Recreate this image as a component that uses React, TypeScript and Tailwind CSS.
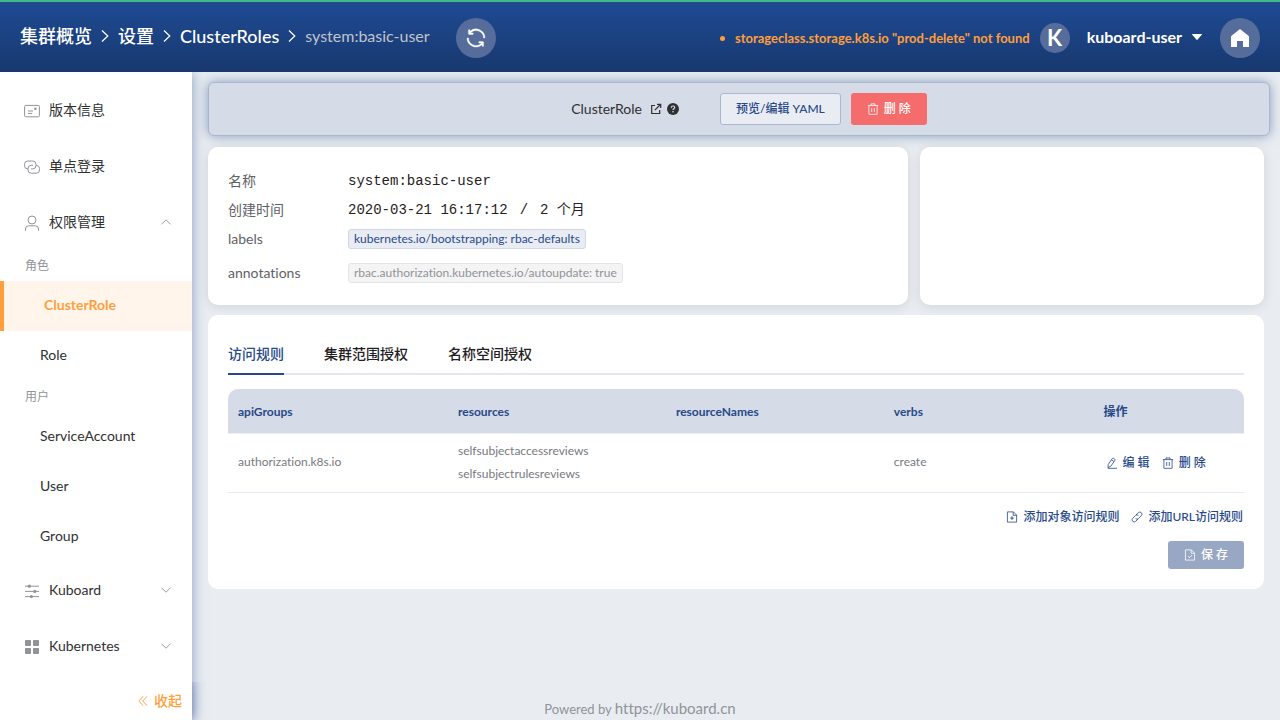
import React from "react";

type IconProps = { className?: string };

const Svg = ({ className = "", children, box = 16 }: IconProps & { children: React.ReactNode; box?: number }) => (
  <svg
    className={`shrink-0 ${className}`}
    viewBox={`0 0 ${box} ${box}`}
    fill="none"
    stroke="currentColor"
    strokeWidth="1"
    aria-hidden="true"
  >
    {children}
  </svg>
);

const CardIcon = ({ className }: IconProps) => (
  <Svg className={className}>
    <rect x="0.6" y="2.4" width="14.8" height="11.4" rx="1.2" />
    <path d="M4 8h5M4 10.4h4.2" />
    <rect x="10.8" y="5.2" width="1.2" height="1.2" fill="currentColor" />
  </Svg>
);

const LinkRingsIcon = ({ className }: IconProps) => (
  <Svg className={className}>
    <path d="M4.3 9.9H3.8A3.3 3.3 0 0 1 .5 6.600V5.300A3.300 3.300 0 0 1 3.800 2H8.700A3.300 3.300 0 0 1 12 5.300V6.600A3.300 3.300 0 0 1 8.700 9.900H7" />
    <path d="M11.700 6.300h.5a3.300 3.300 0 0 1 3.300 3.300v1.300a3.300 3.300 0 0 1-3.300 3.300H7.300A3.300 3.300 0 0 1 4 10.900V9.600A3.300 3.300 0 0 1 7.300 6.300H9" />
  </Svg>
);

const UserIcon = ({ className }: IconProps) => (
  <Svg className={className}>
    <circle cx="8" cy="5" r="4" />
    <path d="M1.500 15.800V14A3.200 3.200 0 0 1 4.700 10.800h6.600A3.200 3.200 0 0 1 14.500 14v1.800" />
  </Svg>
);

const SlidersIcon = ({ className }: IconProps) => (
  <Svg className={className}>
    <path d="M1 3.200h14M1 8.400h14M1 13.600h14" />
    <g fill="currentColor" stroke="none">
      <circle cx="5.300" cy="3.200" r="1.600" />
      <circle cx="10.800" cy="8.400" r="1.600" />
      <circle cx="7.400" cy="13.600" r="1.600" />
    </g>
  </Svg>
);

const GridIcon = ({ className }: IconProps) => (
  <Svg className={className}>
    <g fill="currentColor" stroke="none">
      <rect x="1" y="1" width="6" height="6" rx="0.7" />
      <rect x="9" y="1" width="6" height="6" rx="0.7" />
      <rect x="1" y="9" width="6" height="6" rx="0.7" />
      <rect x="9" y="9" width="6" height="6" rx="0.7" />
    </g>
  </Svg>
);

const ChevronIcon = ({ className }: IconProps) => (
  <Svg className={className} box={12}>
    <path d="M1.500 3.700 6 8.200l4.500-4.500" strokeWidth="0.9" />
  </Svg>
);

const CrumbArrow = () => (
  <svg className="h-4 w-2 shrink-0 text-white" viewBox="0 0 8 16" fill="none" stroke="currentColor" strokeWidth="1.200" aria-hidden="true">
    <path d="M1 2.500 6.800 8 1 13.500" />
  </svg>
);

const DoubleLeftIcon = ({ className }: IconProps) => (
  <Svg className={className} box={12}>
    <path d="M6.200 1.200 1.800 6l4.400 4.800M10.200 1.200 5.800 6l4.400 4.800" strokeWidth="0.9" />
  </Svg>
);

const RefreshIcon = ({ className = "" }: IconProps) => (
  <svg className={className} viewBox="0 0 1024 1024" fill="currentColor" stroke="currentColor" strokeWidth="14" aria-hidden="true">
    <path d="M771.776 794.880A384 384 0 0 1 128 512h64a320 320 0 0 0 555.712 216.448H654.720a32 32 0 1 1 0-64h149.056a32 32 0 0 1 32 32v148.928a32 32 0 1 1-64 0v-50.560zM276.288 295.616h92.992a32 32 0 0 1 0 64H220.160a32 32 0 0 1-32-32V178.560a32 32 0 0 1 64 0v50.560A384 384 0 0 1 896.128 512h-64a320 320 0 0 0-555.776-216.384z" />
  </svg>
);

const HomeIcon = ({ className = "" }: IconProps) => (
  <svg className={className} viewBox="0 0 18 18" fill="currentColor" aria-hidden="true">
    <path d="M9 0 18 7.200V18H12V12H6V18H0V7.200Z" />
  </svg>
);

const TrashIcon = ({ className }: IconProps) => (
  <Svg className={className} box={12}>
    <path d="M.8 2.600h10.400M4 2.600V.9h4v1.700M1.900 2.600v8.700h8.200V2.600M4.700 5v4M7.300 5v4" strokeWidth="0.8" />
  </Svg>
);

const EditIcon = ({ className }: IconProps) => (
  <Svg className={className} box={12}>
    <path d="M2.300 7.300 6.300 1.600Q6.900.8 7.700 1.300L8.700 2Q9.500 2.600 8.900 3.400L4.900 9.100 2 10.600ZM5.500 2.800 8 4.600M1.600 11.300H11" strokeWidth="0.8" />
  </Svg>
);

const FileIcon = ({ className, mark }: IconProps & { mark: string }) => (
  <Svg className={className} box={12}>
    <path d="M1.400.9h6l3.200 3.200v7H1.400ZM7.200.9v3.400h3.400" strokeWidth="0.8" />
    <path d={mark} strokeWidth="0.9" />
  </Svg>
);

const ChainIcon = ({ className }: IconProps) => (
  <Svg className={className} box={12}>
    <path
      d="M5 4 7.300 1.700a2.100 2.100 0 0 1 3 3L7.500 7.500a2.100 2.100 0 0 1-3 0M7 8 4.700 10.300a2.100 2.100 0 0 1-3-3L4.500 4.500a2.100 2.100 0 0 1 3 0"
      strokeWidth="0.8"
    />
  </Svg>
);

const ExternalIcon = ({ className }: IconProps) => (
  <Svg className={className} box={12}>
    <path d="M5 2.500H1.700v8h8V7" strokeWidth="1.200" />
    <path d="M4.800 7.200 10 2M7 1.400h3.700v3.700" strokeWidth="1.200" />
  </Svg>
);

const HelpIcon = ({ className = "" }: IconProps) => (
  <svg className={className} viewBox="0 0 12 12" aria-hidden="true">
    <circle cx="6" cy="6" r="6" fill="currentColor" />
    <path d="M4.300 4.700C4.300 3.600 5 3 6 3s1.700.6 1.700 1.500C7.700 5.700 6 5.600 6 7" fill="none" stroke="#d5dbe7" strokeWidth="1.200" />
    <circle cx="6" cy="8.800" r="0.8" fill="#d5dbe7" />
  </svg>
);

const MenuItem = ({ icon, text, arrow }: { icon: React.ReactNode; text: string; arrow?: "up" | "down" }) => (
  <button type="button" className="flex h-14 w-full items-center pr-5 pl-6 text-left text-sm text-[#303133]">
    <span className="mt-px text-[#909399]">{icon}</span>
    <span className="ml-[9px] flex-1">{text}</span>
    {arrow && <ChevronIcon className={arrow === "up" ? "size-3 rotate-180 text-[#909399]" : "size-3 text-[#909399]"} />}
  </button>
);

const GroupTitle = ({ text }: { text: string }) => (
  <div className="flex h-[31px] items-center pl-[25px] text-xs text-[#909399]">{text}</div>
);

const SubItem = ({ text, active }: { text: string; active?: boolean }) => (
  <a
    href="#"
    className={
      active
        ? "flex h-[50px] items-center border-l-4 border-[#ff9f3c] bg-[#fff5eb] pb-0.5 pl-10 text-sm font-bold text-[#ff9f3c]"
        : "flex h-[50px] items-center pb-0.5 pl-10 text-sm text-[#303133]"
    }
  >
    {text}
  </a>
);

const cardClass = "rounded-[10px] bg-white";
const linkButton = "flex items-center gap-[5px] font-medium text-[#27498a]";

export default function App() {
  return (
    <div className="flex min-h-screen flex-col bg-[#e9edf2] font-['Lato','Noto_Sans_CJK_SC',sans-serif] text-sm text-[#303133] [font-variant-ligatures:none]">
      <header className="relative z-20 border-t-2 border-[#42b983] bg-linear-to-b from-[#1e4b94] to-[#18386e]">
        <div className="flex h-[70px] items-center px-5 pt-0.5">
          <nav className="flex items-center gap-[9px] pb-1 text-lg font-medium text-white">
            <a href="#">集群概览</a>
            <CrumbArrow />
            <a href="#">设置</a>
            <CrumbArrow />
            <a href="#">ClusterRoles</a>
            <CrumbArrow />
            <span className="text-base font-normal text-[#c0c4cc]">system:basic-user</span>
          </nav>
          <button
            type="button"
            aria-label="刷新"
            className="ml-[26px] flex size-10 items-center justify-center rounded-full bg-[#566d9c] text-white"
          >
            <RefreshIcon className="size-6" />
          </button>
          <div className="ml-auto flex items-center">
            <span className="size-[5px] rounded-full bg-[#ff9f3c]" />
            <span className="ml-[10px] text-[13px] font-bold text-[#ff9f3c]">
              storageclass.storage.k8s.io "prod-delete" not found
            </span>
            <span className="ml-[10px] flex size-[30px] items-center justify-center rounded-full bg-[#566d9c] text-[22px] font-bold text-white">
              K
            </span>
            <button type="button" className="ml-[17px] flex items-center gap-[10px] pb-0.5 text-base font-bold text-white">
              kuboard-user
              <svg className="h-1.5 w-2.5" viewBox="0 0 10 6" fill="currentColor" aria-hidden="true">
                <path d="M.5 0h9a.4.4 0 0 1 .3.700L5.400 5.800a.5.5 0 0 1-.8 0L.2.700A.4.4 0 0 1 .5 0Z" />
              </svg>
            </button>
            <a
              href="#"
              aria-label="首页"
              className="ml-[18px] flex size-10 items-center justify-center rounded-full bg-[#566d9c] text-white"
            >
              <HomeIcon className="size-[18px]" />
            </a>
          </div>
        </div>
      </header>

      <div className="flex flex-1">
        <aside className="relative z-10 flex w-48 shrink-0 flex-col bg-white pt-[10px] shadow-[0_0_12px_#27498a80]">
          <MenuItem icon={<CardIcon className="size-4" />} text="版本信息" />
          <MenuItem icon={<LinkRingsIcon className="size-4" />} text="单点登录" />
          <MenuItem icon={<UserIcon className="size-4" />} text="权限管理" arrow="up" />
          <GroupTitle text="角色" />
          <SubItem text="ClusterRole" active />
          <SubItem text="Role" />
          <GroupTitle text="用户" />
          <SubItem text="ServiceAccount" />
          <SubItem text="User" />
          <SubItem text="Group" />
          <MenuItem icon={<SlidersIcon className="size-4" />} text="Kuboard" arrow="down" />
          <MenuItem icon={<GridIcon className="size-4" />} text="Kubernetes" arrow="down" />
          <button
            type="button"
            className="mt-auto flex h-[38px] items-center justify-end gap-[5px] pr-[10px] text-sm font-medium text-[#ff9f3c] shadow-[0_0_12px_#27498a80] [clip-path:inset(0_-16px_0_0)]"
          >
            <DoubleLeftIcon className="size-3" />
            收起
          </button>
        </aside>

        <main className="flex min-w-0 flex-1 flex-col pt-[10px] pl-4">
          <section className="mr-[10px] flex items-center justify-center rounded-md border border-[#a9b8d1] bg-[#d5dbe7] py-[10px] pl-5 shadow-[0_0_12px_#27498a80]">
            <h1 className="text-sm">ClusterRole</h1>
            <a href="#" aria-label="打开" className="ml-2">
              <ExternalIcon className="size-3" />
            </a>
            <button type="button" aria-label="帮助" className="ml-[5px]">
              <HelpIcon className="size-3" />
            </button>
            <button
              type="button"
              className="ml-[41px] h-8 rounded-[3px] border border-[#a9b8d1] bg-[#e9edf3] px-[15px] text-xs font-medium text-[#27498a]"
            >
              预览/编辑 YAML
            </button>
            <button
              type="button"
              className="ml-[10px] flex h-8 items-center gap-[5px] rounded-[3px] bg-[#f56c6c] px-4 text-xs font-medium text-white"
            >
              <TrashIcon className="size-3" />
              删&nbsp;除
            </button>
          </section>

          <div className="mt-[11px] mr-4 grid grid-cols-[700fr_344fr] gap-3">
            <section className={`${cardClass} px-5 pt-[19px] pb-[18px] shadow-[0_2px_12px_#0000001a]`}>
              <dl className="text-[#606266]">
                <div className="flex h-[29px] items-center">
                  <dt className="w-[120px]">名称</dt>
                  <dd className="font-['Liberation_Mono','Noto_Sans_CJK_SC',monospace] text-[#1f2124]">system:basic-user</dd>
                </div>
                <div className="flex h-[29px] items-center">
                  <dt className="w-[120px]">创建时间</dt>
                  <dd className="flex font-['Liberation_Mono','Noto_Sans_CJK_SC',monospace] text-[#1f2124]">
                    2020-03-21 16:17:12<span className="mx-3">/</span>2 个月
                  </dd>
                </div>
                <div className="flex h-[29px] items-center">
                  <dt className="w-[120px]">labels</dt>
                  <dd className="flex h-5 items-center rounded-[3px] border border-[#d0d8e6] bg-[#e9edf3] px-[5px] text-xs text-[#27498a]">
                    kubernetes.io/bootstrapping: rbac-defaults
                  </dd>
                </div>
                <div className="mt-[5px] flex h-[29px] items-center">
                  <dt className="w-[120px]">annotations</dt>
                  <dd className="flex h-5 items-center rounded-[3px] border border-[#e4e4e6] bg-[#f4f4f5] px-[5px] text-xs text-[#909399]">
                    rbac.authorization.kubernetes.io/autoupdate: true
                  </dd>
                </div>
              </dl>
            </section>
            <section className={`${cardClass} shadow-[0_2px_12px_#0000001a]`} />
          </div>

          <section className={`${cardClass} mt-[10px] mr-4 px-5 pt-5 pb-5`}>
            <div role="tablist" className="flex gap-10 border-b-2 border-[#e4e7ed] font-medium text-[#1f2124]">
              <button type="button" role="tab" aria-selected="true" className="-mb-0.5 h-10 border-b-2 border-[#27498a] text-[#27498a]">
                访问规则
              </button>
              <button type="button" role="tab" aria-selected="false">集群范围授权</button>
              <button type="button" role="tab" aria-selected="false">名称空间授权</button>
            </div>

            <table className="mt-[14px] w-full table-fixed text-left text-xs text-[#777a80]">
              <colgroup>
                <col className="w-[21.65%]" />
                <col className="w-[21.45%]" />
                <col className="w-[21.45%]" />
                <col className="w-[20.65%]" />
                <col />
              </colgroup>
              <thead className="text-[#27498a]">
                <tr className="h-11 border-b border-[#ebeef5]">
                  <th className="rounded-tl-[10px] bg-[#d5dbe7] px-[10px] pt-0.5">apiGroups</th>
                  <th className="bg-[#d5dbe7] px-[10px] pt-0.5">resources</th>
                  <th className="bg-[#d5dbe7] px-[10px] pt-0.5">resourceNames</th>
                  <th className="bg-[#d5dbe7] px-[10px] pt-0.5">verbs</th>
                  <th className="rounded-tr-[10px] bg-[#d5dbe7] px-[10px] pt-0.5">操作</th>
                </tr>
              </thead>
              <tbody>
                <tr className="h-[59px] border-b border-[#e6eaf2]">
                  <td className="px-[10px] pb-0.5">authorization.k8s.io</td>
                  <td className="px-[10px] pb-0.5 leading-[23px]">
                    <div>selfsubjectaccessreviews</div>
                    <div>selfsubjectrulesreviews</div>
                  </td>
                  <td className="px-[10px]" />
                  <td className="px-[10px] pb-0.5">create</td>
                  <td className="px-3">
                    <div className="flex gap-3">
                      <button type="button" className={linkButton}>
                        <EditIcon className="size-3" />
                        编&nbsp;辑
                      </button>
                      <button type="button" className={linkButton}>
                        <TrashIcon className="size-3" />
                        删&nbsp;除
                      </button>
                    </div>
                  </td>
                </tr>
              </tbody>
            </table>

            <div className="mt-4 flex justify-end gap-3 pr-px text-xs">
              <button type="button" className={linkButton}>
                <FileIcon className="size-3" mark="M6 5.300v3.600M4.200 7.100h3.600" />
                添加对象访问规则
              </button>
              <button type="button" className={linkButton}>
                <ChainIcon className="size-3" />
                添加URL访问规则
              </button>
            </div>
            <div className="mt-4 flex justify-end">
              <button
                type="button"
                disabled
                className="flex h-7 items-center gap-[5px] rounded-[3px] bg-[#98a8c4] px-4 text-xs font-medium text-white"
              >
                <FileIcon className="size-3" mark="M4 7.200 5.500 8.700 8.200 6" />
                保&nbsp;存
              </button>
            </div>
          </section>

          <footer className="mt-auto pr-52 text-center leading-[22px] text-[#909399]">
            <span className="text-[13px]">Powered by </span>
            <a href="#" className="text-[15px]">https://kuboard.cn</a>
          </footer>
        </main>
      </div>
    </div>
  );
}
